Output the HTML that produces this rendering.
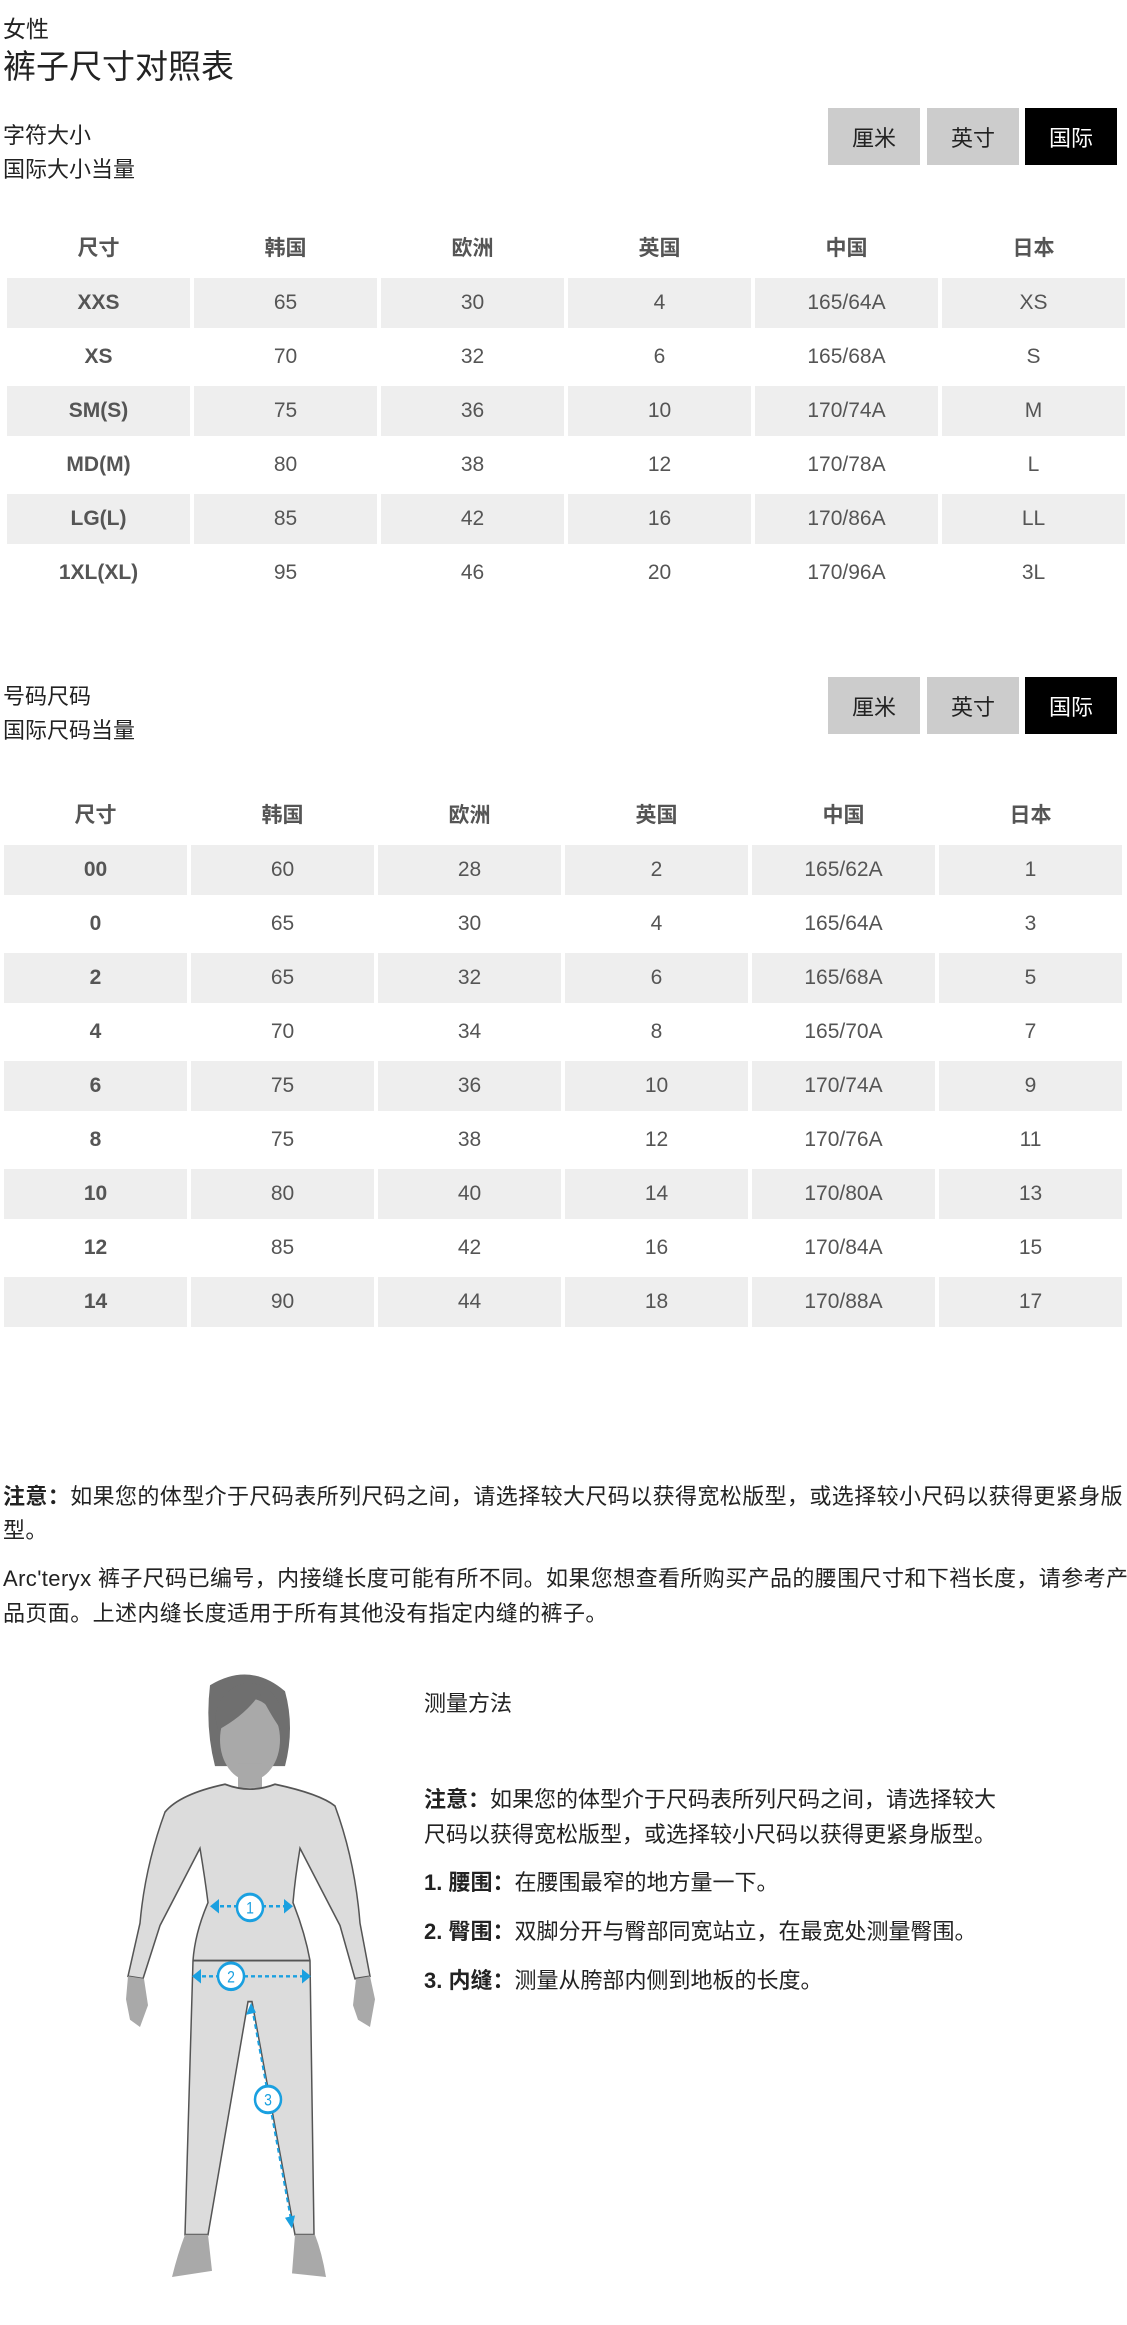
<!DOCTYPE html>
<html><head><meta charset="utf-8">
<style>
*{margin:0;padding:0;box-sizing:border-box}
body{width:1127px;height:2325px;background:#fff;position:relative;overflow:hidden;font-family:"Liberation Sans Narrow","Liberation Sans","Noto Sans CJK SC",sans-serif;color:#222}
.a{position:absolute;white-space:nowrap;line-height:1}
.btn{position:absolute;width:92px;height:57px;background:#ccc;color:#222;font-size:22px;display:flex;align-items:center;justify-content:center}
.btn.on{background:#000;color:#fff}
.c{position:absolute;width:183px;height:50px;display:flex;align-items:center;justify-content:center;font-size:21px;color:#555}
.g{background:#eee}
.h{font-weight:bold;color:#555}
.t{font-size:22px;color:#222}
.n{font-size:22px;letter-spacing:0.4px}
</style></head><body>
<div class="a" style="left:3px;top:18px;font-size:23px">女性</div>
<div class="a" style="left:3px;top:50px;font-size:33px">裤子尺寸对照表</div>

<div class="a" style="left:3px;top:125px;font-size:22px">字符大小</div>
<div class="a" style="left:3px;top:159px;font-size:22px">国际大小当量</div>
<div class="btn" style="left:828px;top:108px">厘米</div>
<div class="btn" style="left:927px;top:108px">英寸</div>
<div class="btn on" style="left:1025px;top:108px">国际</div>

<div id="t1"></div>

<div class="a" style="left:3px;top:686px;font-size:22px">号码尺码</div>
<div class="a" style="left:3px;top:720px;font-size:22px">国际尺码当量</div>
<div class="btn" style="left:828px;top:677px">厘米</div>
<div class="btn" style="left:927px;top:677px">英寸</div>
<div class="btn on" style="left:1025px;top:677px">国际</div>

<div id="t2"></div>

<div class="a t n" style="left:3px;top:1486px"><b>注意：</b>如果您的体型介于尺码表所列尺码之间，请选择较大尺码以获得宽松版型，或选择较小尺码以获得更紧身版</div>
<div class="a t n" style="left:3px;top:1520px">型。</div>
<div class="a t n" style="left:3px;top:1568px">Arc'teryx 裤子尺码已编号，内接缝长度可能有所不同。如果您想查看所购买产品的腰围尺寸和下裆长度，请参考产</div>
<div class="a t n" style="left:3px;top:1603px">品页面。上述内缝长度适用于所有其他没有指定内缝的裤子。</div>

<div class="a t" style="left:424px;top:1693px">测量方法</div>
<div class="a t" style="left:424px;top:1789px"><b>注意：</b>如果您的体型介于尺码表所列尺码之间，请选择较大</div>
<div class="a t" style="left:424px;top:1824px">尺码以获得宽松版型，或选择较小尺码以获得更紧身版型。</div>
<div class="a t" style="left:424px;top:1872px"><b>1. 腰围：</b>在腰围最窄的地方量一下。</div>
<div class="a t" style="left:424px;top:1921px"><b>2. 臀围：</b>双脚分开与臀部同宽站立，在最宽处测量臀围。</div>
<div class="a t" style="left:424px;top:1970px"><b>3. 内缝：</b>测量从胯部内侧到地板的长度。</div>

<svg style="position:absolute;left:100px;top:1643px" width="300" height="640" viewBox="0 0 300 530" preserveAspectRatio="none">
<path d="M110 35 Q150 15 185 40 Q195 70 185 102 L115 102 Q105 70 110 35Z" fill="#6f6f6f"/>
<ellipse cx="150" cy="80" rx="30" ry="34" fill="#a9a9a9"/>
<path d="M118 72 Q145 60 160 42 Q172 62 184 75 L184 60 Q175 35 150 33 Q122 35 115 60Z" fill="#6f6f6f"/>
<rect x="138" y="100" width="24" height="20" fill="#a9a9a9"/>
<path d="M28 276 L40 232 Q45 185 65 140 Q80 125 125 117 Q150 125 175 117 Q220 125 235 135 Q255 180 260 232 L270 276 L255 278 L240 234 L200 170 Q195 195 193 215 Q205 240 210 263 L214 490 L195 490 L152 297 L148 297 L108 490 L85 490 L93 263 Q95 240 108 215 Q105 195 100 170 L60 234 L43 278Z" fill="#dcdcdc" stroke="#555" stroke-width="1.5"/>
<path d="M93 263 L210 263" stroke="#555" stroke-width="1.5"/>
<path d="M28 276 L44 278 L48 300 L40 318 L30 312 L26 295Z M256 278 L270 276 L275 295 L270 318 L258 312 L253 300Z" fill="#a9a9a9"/>
<path d="M85 490 L108 490 L112 520 L72 525 Q78 505 85 490Z M195 490 L215 490 Q222 505 226 525 L192 522Z" fill="#a9a9a9"/>
<g stroke="#1aa0e0" stroke-width="2" stroke-dasharray="4 3" fill="none">
<path d="M113 218 L190 218"/><path d="M95 276 L208 276"/><path d="M152 302 L192 482"/>
</g>
<g fill="#1aa0e0"><path d="M110 218 l9 -6 v12z M193 218 l-9 -6 v12z M92 276 l9 -6 v12z M211 276 l-9 -6 v12z M151 298 l-5 10 l10 -2z M192 485 l-7 -9 l10 -2z"/></g>
<g fill="#fff" stroke="#1aa0e0" stroke-width="2.5"><ellipse cx="150" cy="219" rx="13" ry="11"/><ellipse cx="131" cy="276" rx="13" ry="11"/><ellipse cx="168" cy="378" rx="13" ry="11"/></g>
<g fill="#1aa0e0" font-family="Liberation Sans" font-size="14" text-anchor="middle"><text x="150" y="224">1</text><text x="131" y="281">2</text><text x="168" y="383">3</text></g>
</svg>

<script>
function tbl(id,top,x0,rows){
 var h=['尺寸','韩国','欧洲','英国','中国','日本'],s='';
 for(var i=0;i<6;i++)s+='<div class="c h" style="left:'+(x0+i*187)+'px;top:'+(top-56)+'px">'+h[i]+'</div>';
 rows.forEach(function(r,j){r.forEach(function(v,i){
  s+='<div class="c'+(j%2==0?' g':'')+(i==0?' h':'')+'" style="left:'+(x0+i*187)+'px;top:'+(top+j*54)+'px">'+v+'</div>';});});
 document.getElementById(id).outerHTML=s;
}
tbl('t1',278,7,[['XXS',65,30,4,'165/64A','XS'],['XS',70,32,6,'165/68A','S'],['SM(S)',75,36,10,'170/74A','M'],['MD(M)',80,38,12,'170/78A','L'],['LG(L)',85,42,16,'170/86A','LL'],['1XL(XL)',95,46,20,'170/96A','3L']]);
tbl('t2',845,4,[['00',60,28,2,'165/62A',1],['0',65,30,4,'165/64A',3],['2',65,32,6,'165/68A',5],['4',70,34,8,'165/70A',7],['6',75,36,10,'170/74A',9],['8',75,38,12,'170/76A',11],['10',80,40,14,'170/80A',13],['12',85,42,16,'170/84A',15],['14',90,44,18,'170/88A',17]]);
</script>
</body></html>
